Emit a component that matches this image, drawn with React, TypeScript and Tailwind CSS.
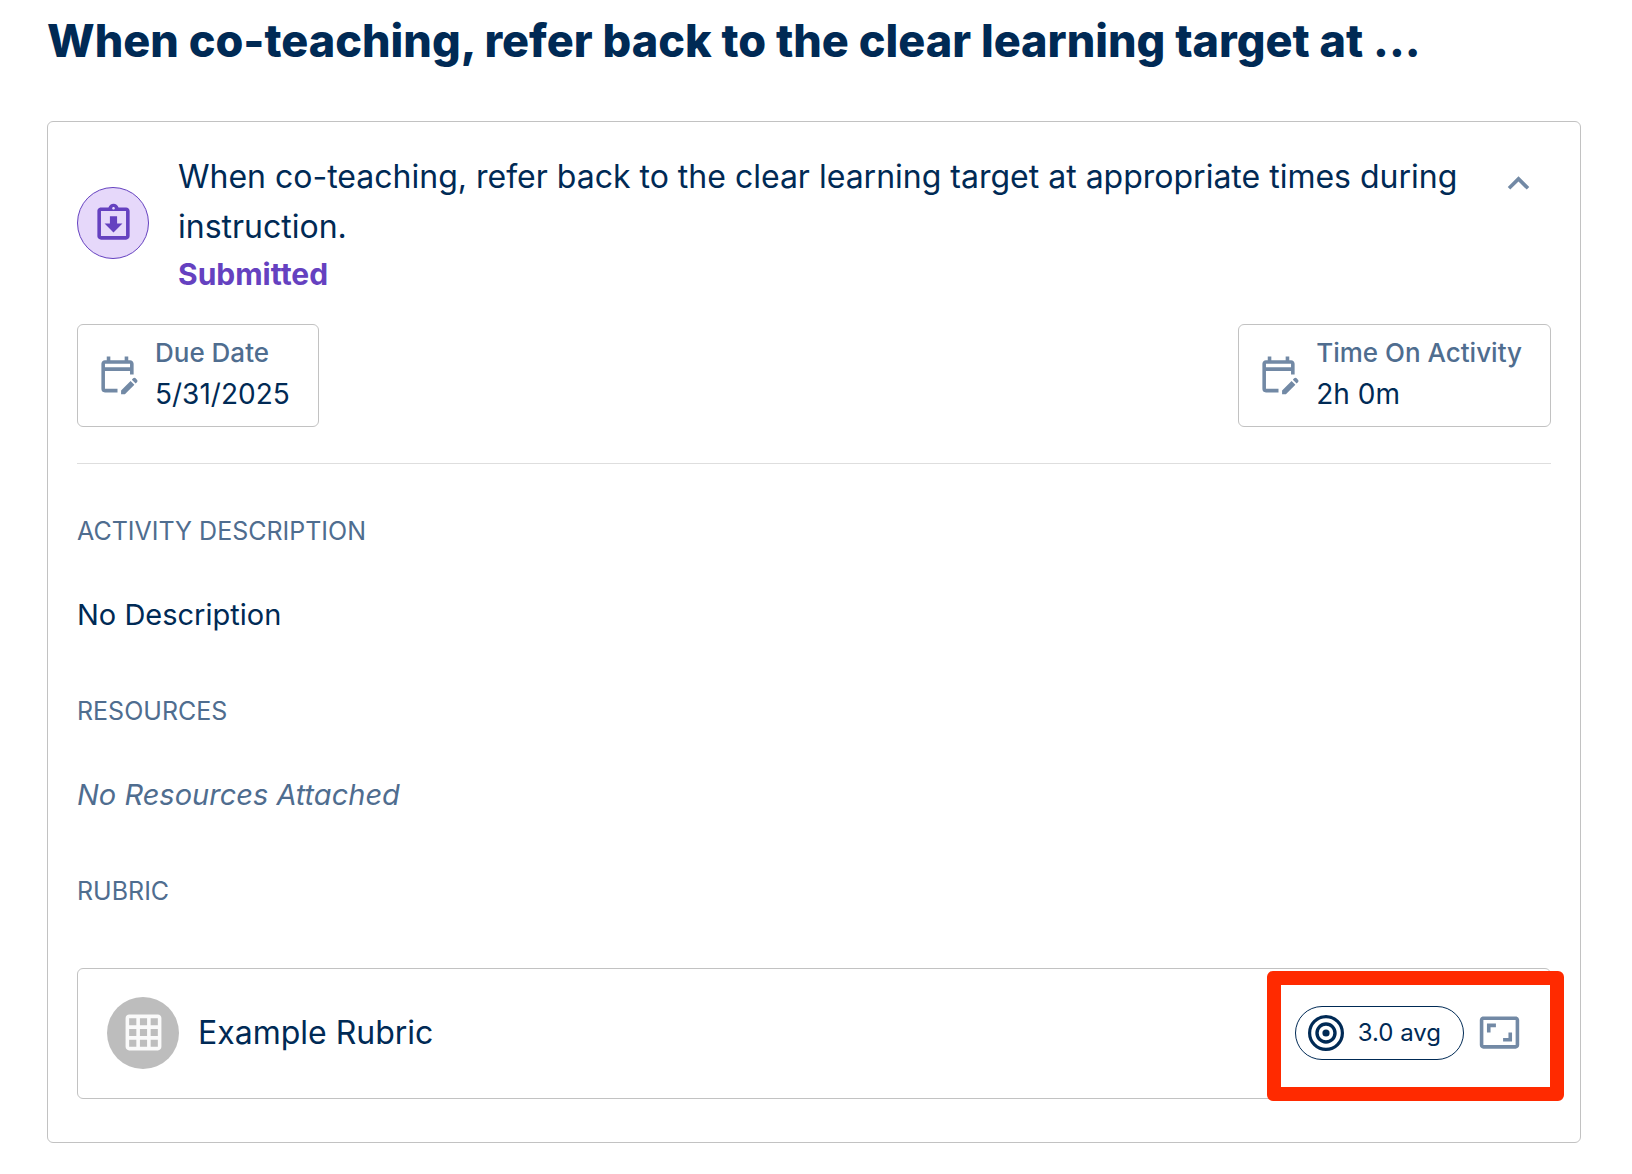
import React, { useState } from "react";
import {
  MdExpandLess,
  MdGridOn,
  MdOutlineAspectRatio,
  MdOutlineAssignmentReturned,
  MdOutlineEditCalendar,
} from "react-icons/md";

interface InfoBoxProps {
  label: string;
  value: string;
}

const InfoBox: React.FC<InfoBoxProps> = ({ label, value }) => (
  <div className="flex h-[103px] items-center gap-4 rounded-md border border-[#c2c2c2] pb-0.5 pl-[18px] pr-7">
    <MdOutlineEditCalendar className="size-[43px] shrink-0 text-[#7289a5]" />
    <dl>
      <dt className="text-[26px] font-medium leading-[38px] text-[#4f6d8f]">{label}</dt>
      <dd className="text-[28px] leading-[44px]">{value}</dd>
    </dl>
  </div>
);

interface SectionProps {
  title: string;
  children: React.ReactNode;
}

const Section: React.FC<SectionProps> = ({ title, children }) => (
  <section>
    <h2 className="text-[25px] leading-[40px] text-[#4f6d8f]">{title}</h2>
    <div className="mt-[42px]">{children}</div>
  </section>
);

const TargetIcon: React.FC = () => (
  <svg viewBox="0 0 36 36" className="size-9 shrink-0" fill="none" stroke="currentColor">
    <circle cx="18" cy="18" r="16.4" strokeWidth="3.2" />
    <circle cx="18" cy="18" r="9" strokeWidth="3.4" />
    <circle cx="18" cy="18" r="3.6" fill="currentColor" stroke="none" />
  </svg>
);

const App: React.FC = () => {
  const [isOpen, setIsOpen] = useState(true);

  return (
    <main className="bg-white pb-8 pl-[47px] pr-[51px] pt-3 font-['Inter',sans-serif] text-[#002a55]">
      <h1 className="truncate text-[45px] font-extrabold leading-[58px]">
        When co-teaching, refer back to the clear learning target at ...
      </h1>

      <article className="mt-[51px] rounded-md border border-[#c2c2c2] px-[29px] pb-[43px] pt-7">
        {/* Activity header */}
        <header className="flex items-center">
          <div className="flex size-[72px] shrink-0 items-center justify-center rounded-full border border-[#6541c0] bg-[#e6d8fa] text-[#6541c0]">
            <MdOutlineAssignmentReturned className="size-[43px]" />
          </div>
          <div className="ml-[29px] min-w-0 flex-1 pt-0.5">
            <p className="text-[32px] leading-[50px]">
              When co-teaching, refer back to the clear learning target at
              appropriate times during instruction.
            </p>
            <p className="text-[30px] font-bold leading-[44px] text-[#6541c0]">
              Submitted
            </p>
          </div>
          <button
            type="button"
            aria-label="Toggle activity details"
            aria-expanded={isOpen}
            onClick={() => setIsOpen(!isOpen)}
            className="ml-4 mr-[11px] mt-3 self-start text-[#7289a5]"
          >
            <MdExpandLess className={`size-[43px] ${isOpen ? "" : "rotate-180"}`} />
          </button>
        </header>

        {isOpen && (
          <>
            <div className="mt-7 flex justify-between">
              <InfoBox label="Due Date" value="5/31/2025" />
              <InfoBox label="Time On Activity" value="2h 0m" />
            </div>

            <hr className="mt-9 border-[#dedede]" />

            <div className="mt-[47px] flex flex-col gap-[54px]">
              <Section title="ACTIVITY DESCRIPTION">
                <p className="text-[29px] leading-[44px]">No Description</p>
              </Section>
              <Section title="RESOURCES">
                <p className="text-[29px] italic leading-[44px] text-[#4f6d8f]">
                  No Resources Attached
                </p>
              </Section>
              <Section title="RUBRIC">
                <div className="mt-[57px] flex h-[131px] items-center rounded-md border border-[#c2c2c2] pb-0.5 pl-[29px] pr-[29px]">
                  <div className="flex size-[72px] shrink-0 items-center justify-center rounded-full bg-[#bdbdbd] text-[#fafafa]">
                    <MdGridOn className="size-[43px]" />
                  </div>
                  <p className="ml-[19px] flex-1 text-[32px] leading-[50px]">
                    Example Rubric
                  </p>
                  <div className="relative flex items-center gap-3.5">
                    <div className="flex h-[54px] items-center gap-3.5 rounded-full border border-current pl-3 pr-[22px] text-[24px]">
                      <TargetIcon />
                      3.0 avg
                    </div>
                    <button
                      type="button"
                      aria-label="Open rubric"
                      className="text-[#7289a5]"
                    >
                      <MdOutlineAspectRatio className="size-[43px]" />
                    </button>
                    {/* Highlight around the score */}
                    <div className="pointer-events-none absolute -bottom-[41px] -left-7 -right-[43px] -top-[35px] rounded-md">
                      <div className="h-full rounded-md border-[14px] border-[#ff2a00]" />
                    </div>
                  </div>
                </div>
              </Section>
            </div>
          </>
        )}
      </article>
    </main>
  );
};

export default App;
